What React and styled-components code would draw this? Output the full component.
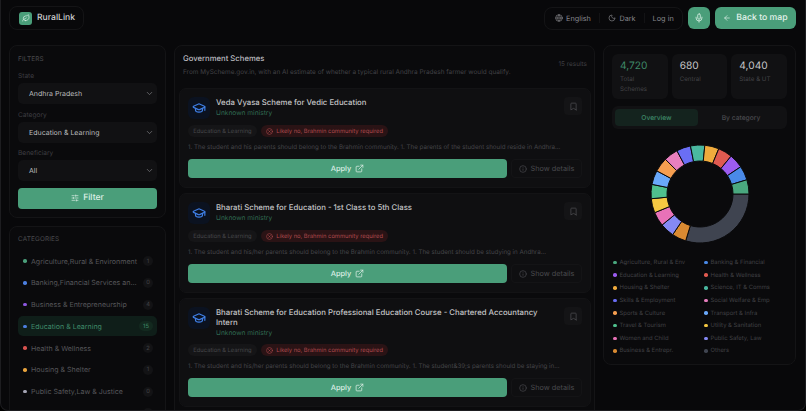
import React from 'react'
import styled, { createGlobalStyle } from 'styled-components'
import {
  Leaf, Globe, Moon, Mic, ArrowLeft, GraduationCap, Bookmark, CircleX,
  ExternalLink, Info, SlidersHorizontal, ChevronDown,
} from 'lucide-react'

const GREEN = '#4a9e7a'

const Global = createGlobalStyle`
  html, body { margin: 0; height: 100%; background: #000; }
  #root { height: 100%; }
  * { box-sizing: border-box; text-rendering: geometricPrecision; }
  body { font-family: Inter, "Liberation Sans", sans-serif; color: #d8d8da; overflow: hidden; }
`

const Page = styled.div`
  height: 411px;
  overflow: hidden;
  padding: 6px 9px 0 8px;
  background: #08080a;
  border: 1px solid #1d1d20;
  border-top: 0;
  border-radius: 0 0 8px 8px;
  display: flex;
  flex-direction: column;
  gap: 15px;
`
const Header = styled.header`
  display: flex;
  justify-content: space-between;
  align-items: center;
  height: 24px;
`
const Brand = styled.div`
  width: 75px;
  height: 24px;
  border: 1px solid #141416;
  border-radius: 8px;
  display: flex;
  align-items: center;
  gap: 5px;
  padding-left: 9px;
  font-size: 8.6px;
  font-weight: 500;
  color: #cfcfd1;
`
const LogoMark = styled.span`
  width: 13px;
  height: 13px;
  border-radius: 3px;
  background: ${GREEN};
  display: flex;
  align-items: center;
  justify-content: center;
  color: #dff3ea;
`
const HeaderRight = styled.div`
  display: flex;
  align-items: center;
  gap: 5px;
`
const NavPill = styled.nav`
  width: 139px;
  height: 23px;
  border: 1px solid #141416;
  border-radius: 8px;
  display: flex;
  align-items: center;
  padding-left: 9.5px;
  font-size: 7.3px;
  color: #85858a;
  white-space: nowrap;
`
const NavItem = styled.span`
  display: flex;
  align-items: center;
  gap: 3.5px;
  padding-right: 8px;
  margin-right: 8px;
  border-right: ${(p) => (p.$last ? 'none' : '1px solid #131315')};
  height: 10px;
`
const MicButton = styled.button`
  width: 22px;
  height: 22px;
  border: 0;
  border-radius: 6px;
  background: ${GREEN};
  color: #d9efe5;
  display: flex;
  align-items: center;
  justify-content: center;
  padding: 0;
`
const BackButton = styled.button`
  width: 81px;
  height: 22px;
  border: 0;
  border-radius: 6px;
  background: ${GREEN};
  color: #e3f2eb;
  font: 500 8.7px Inter, sans-serif;
  display: flex;
  align-items: center;
  justify-content: center;
  gap: 5px;
  padding: 0;
`
const Columns = styled.div`
  display: grid;
  grid-template-columns: 157px 421px 193px;
  gap: 8px;
  align-items: start;
`
const SideColumn = styled.aside`
  display: flex;
  flex-direction: column;
  gap: 8px;
`
const Panel = styled.section`
  border: 1px solid #141416;
  border-radius: 8px;
  background: #0a0a0c;
`
const FilterPanel = styled(Panel)`
  height: 173px;
  padding: 9px 8px 0 8px;
`
const SectionLabel = styled.div`
  font-size: 6.4px;
  line-height: 9px;
  letter-spacing: 0.15px;
  color: #4a4a4e;
  margin-bottom: ${(p) => p.$gap || 8}px;
`
const FieldLabel = styled.div`
  font-size: 6.6px;
  color: #3d3d41;
  margin-bottom: 2px;
  height: 9px;
`
const Select = styled.div`
  height: 21px;
  border-radius: 5px;
  background: #111113;
  display: flex;
  align-items: center;
  justify-content: space-between;
  padding: 0 3px 0 11px;
  margin-bottom: 6.5px;
  font-size: 7px;
  color: #bcbcbe;
  svg { color: #77777b; }
`
const FilterButton = styled.button`
  width: 100%;
  height: 21px;
  border: 0;
  border-radius: 4px;
  background: ${GREEN};
  color: #dcefe6;
  font: 500 8.6px Inter, sans-serif;
  display: flex;
  align-items: center;
  justify-content: center;
  gap: 4px;
`
const CategoryPanel = styled(Panel)`
  height: 200px;
  padding: 8px 8px 0 8px;
  overflow: hidden;
`
const CategoryRow = styled.div`
  height: 20px;
  margin-bottom: 1.75px;
  border-radius: 5px;
  background: ${(p) => (p.$active ? '#0f1e19' : 'transparent')};
  color: ${(p) => (p.$active ? '#3f8a69' : '#56565a')};
  display: flex;
  align-items: center;
  padding: 0 4px 0 5px;
  font-size: 7.05px;
`
const Dot = styled.i`
  flex: none;
  width: 3.5px;
  height: 3.5px;
  border-radius: 50%;
  background: ${(p) => p.$color};
`
const CategoryName = styled.span`
  flex: 1;
  margin-left: 4.5px;
  white-space: nowrap;
  overflow: hidden;
  text-overflow: ellipsis;
`
const CountBadge = styled.span`
  flex: none;
  width: ${(p) => (p.$active ? '14px' : '10px')};
  height: 10px;
  margin-left: 4px;
  border-radius: 5px;
  background: ${(p) => (p.$active ? '#13291f' : '#131315')};
  color: ${(p) => (p.$active ? '#3f8a69' : '#434347')};
  font-size: 5.8px;
  display: flex;
  align-items: center;
  justify-content: center;
`
const MainPanel = styled(Panel)`
  height: 380px;
  padding: 6px 3px 0 4px;
`
const MainHead = styled.div`
  display: flex;
  justify-content: space-between;
  align-items: center;
  padding: 0 4px;
  height: 24px;
  margin-bottom: 12px;
`
const MainTitle = styled.h2`
  margin: 0 0 3px;
  font-size: 7.7px;
  line-height: 12px;
  font-weight: 500;
  color: #bdbdc0;
`
const MainSub = styled.p`
  margin: 0;
  font-size: 6.45px;
  line-height: 8px;
  color: #414145;
`
const Results = styled.span`
  font-size: 6.4px;
  color: #3f3f43;
`
const CardList = styled.div`
  display: flex;
  flex-direction: column;
  gap: 5px;
`
const Card = styled.article`
  border: 1px solid #131315;
  border-radius: 7px;
  background: #0f0f11;
  padding: 8px 8px 9px;
`
const CardTop = styled.div`
  display: flex;
  align-items: flex-start;
  gap: 6px;
  min-height: 22px;
`
const SchemeIcon = styled.span`
  flex: none;
  width: 22px;
  height: 22px;
  border-radius: 6px;
  background: #0b1220;
  color: #3f7fe6;
  display: flex;
  align-items: center;
  justify-content: center;
`
const CardHeading = styled.div`
  flex: 1;
  padding-bottom: 1px;
`
const CardTitle = styled.h3`
  margin: 0;
  font-size: 7.75px;
  line-height: 10px;
  font-weight: 500;
  color: #c4c4c6;
`
const Ministry = styled.div`
  margin-top: 2px;
  font-size: 6.6px;
  line-height: 8px;
  color: #2f6b52;
`
const BookmarkButton = styled.span`
  flex: none;
  width: 18px;
  height: 18px;
  margin-left: 16px;
  border-radius: 4px;
  background: #141416;
  color: #4d4d51;
  display: flex;
  align-items: center;
  justify-content: center;
`
const TagRow = styled.div`
  display: flex;
  gap: 4px;
  margin-top: 6px;
`
const Tag = styled.span`
  height: 12px;
  padding: 0 5.3px;
  border-radius: 6px;
  background: #151517;
  color: #47474b;
  font-size: 5.8px;
  display: flex;
  align-items: center;
`
const WarnTag = styled(Tag)`
  background: #2a1315;
  color: #b04a4e;
  gap: 3px;
`
const Description = styled.p`
  margin: 5.5px 0 0;
  font-size: 6.2px;
  line-height: 9px;
  color: #454549;
  white-space: nowrap;
  overflow: hidden;
`
const CardActions = styled.div`
  display: flex;
  gap: 4px;
  margin-top: 7.5px;
`
const ApplyButton = styled.button`
  flex: 1;
  height: 19px;
  border: 0;
  border-radius: 4px;
  background: ${GREEN};
  color: #dcefe6;
  font: 500 7.4px Inter, sans-serif;
  display: flex;
  align-items: center;
  justify-content: center;
  gap: 4px;
`
const DetailsButton = styled.button`
  flex: none;
  width: 71px;
  height: 19px;
  border: 1px solid #141416;
  border-radius: 4px;
  background: transparent;
  color: #4a4a4e;
  font: 400 7.3px Inter, sans-serif;
  display: flex;
  align-items: center;
  justify-content: center;
  gap: 4px;
  padding: 0;
`
const StatsPanel = styled(Panel)`
  height: 320px;
  padding: 8px 8px 0 8px;
`
const StatGrid = styled.div`
  display: grid;
  grid-template-columns: repeat(3, 1fr);
  gap: 4px;
`
const StatCard = styled.div`
  height: 45px;
  border-radius: 6px;
  background: #111113;
  padding: 5px 8px;
`
const StatValue = styled.div`
  font-size: 10.2px;
  line-height: 14px;
  color: ${(p) => (p.$accent ? '#3f8a69' : '#c8c8ca')};
`
const StatLabel = styled.div`
  margin-top: 2px;
  font-size: 6.2px;
  line-height: 9.5px;
  color: #434347;
`
const Tabs = styled.div`
  height: 23px;
  margin-top: 7px;
  padding: 3px;
  border-radius: 6px;
  background: #111113;
  display: grid;
  grid-template-columns: 83px 1fr;
`
const Tab = styled.div`
  border-radius: 4px;
  background: ${(p) => (p.$active ? '#14231e' : 'transparent')};
  color: ${(p) => (p.$active ? '#3f8a69' : '#4a4a4e')};
  font-size: 6.7px;
  font-weight: 500;
  display: flex;
  align-items: center;
  justify-content: center;
`
const ChartWrap = styled.div`
  display: flex;
  justify-content: center;
  margin-top: 15px;
  svg { display: block; }
`
const Legend = styled.div`
  display: grid;
  grid-template-columns: 91px 1fr;
  row-gap: 3.65px;
  margin-top: 14px;
  padding-left: 1px;
`
const LegendItem = styled.div`
  display: flex;
  align-items: center;
  gap: 3px;
  height: 9px;
  font-size: 5.9px;
  color: #404044;
  white-space: nowrap;
`

const filters = [
  ['State', 'Andhra Pradesh'],
  ['Category', 'Education & Learning'],
  ['Beneficiary', 'All'],
]

const categories = [
  ['Agriculture,Rural & Environment', 1, '#4a9e7a'],
  ['Banking,Financial Services and Insurance', 0, '#4c7fe0'],
  ['Business & Entrepreneurship', 4, '#8d57e0'],
  ['Education & Learning', 15, '#4c7fe0'],
  ['Health & Wellness', 2, '#d9534f'],
  ['Housing & Shelter', 1, '#e8a33d'],
  ['Public Safety,Law & Justice', 0, '#a5a5b5'],
  ['Science, IT & Communications', 0, '#4aae9b'],
]

const schemes = [
  {
    title: 'Veda Vyasa Scheme for Vedic Education',
    text: '1. The student and his parents should belong to the Brahmin community. 1. The parents of the student should reside in Andhra...',
  },
  {
    title: 'Bharati Scheme for Education - 1st Class to 5th Class',
    text: '1. The student and his/her parents should belong to the Brahmin community. 1. The student should be studying in Andhra...',
  },
  {
    title: 'Bharati Scheme for Education Professional Education Course - Chartered Accountancy Intern',
    text: '1. The student and his/her parents should belong to the Brahmin community. 1. The student&39;s parents should be staying in...',
  },
]

const legend = [
  ['Agriculture, Rural & Env', '#4aa87f'],
  ['Banking & Financial', '#4a8ae8'],
  ['Education & Learning', '#9b5cf0'],
  ['Health & Wellness', '#e05a50'],
  ['Housing & Shelter', '#f0ab3d'],
  ['Science, IT & Comms', '#4ab8a0'],
  ['Skills & Employment', '#6a6ef5'],
  ['Social Welfare & Emp', '#e87fbf'],
  ['Sports & Culture', '#f59e50'],
  ['Transport & Infra', '#69a8fa'],
  ['Travel & Tourism', '#4fc08d'],
  ['Utility & Sanitation', '#f5c842'],
  ['Women and Child', '#e872b8'],
  ['Public Safety, Law', '#8589f5'],
  ['Business & Entrepr.', '#d98a32'],
  ['Others', '#3f4450'],
]

// clockwise from 3 o'clock: Others first, then the rest backwards
const ringOrder = [...legend.slice(0, 15)].reverse()
const OTHERS_DEG = 107

const arcPath = (cx, cy, r1, r2, from, to) => {
  const rad = (d) => (d * Math.PI) / 180
  const pt = (r, d) => `${(cx + r * Math.cos(rad(d))).toFixed(2)} ${(cy + r * Math.sin(rad(d))).toFixed(2)}`
  const large = to - from > 180 ? 1 : 0
  return `M${pt(r2, from)} A${r2} ${r2} 0 ${large} 1 ${pt(r2, to)} L${pt(r1, to)} A${r1} ${r1} 0 ${large} 0 ${pt(r1, from)} Z`
}

const Donut = () => {
  const step = (360 - OTHERS_DEG) / ringOrder.length
  return (
    <svg width="100" height="100" viewBox="0 0 100 100">
      <path d={arcPath(50, 50, 33, 49, 0, OTHERS_DEG)} fill="#3f4450" stroke="#0a0a0c" strokeWidth="1" />
      {ringOrder.map(([name, color], i) => (
        <path
          key={name}
          d={arcPath(50, 50, 33, 49, OTHERS_DEG + i * step, OTHERS_DEG + (i + 1) * step)}
          fill={color}
          stroke="#0a0a0c"
          strokeWidth="1"
        />
      ))}
    </svg>
  )
}

const SchemeCard = ({ title, text }) => (
  <Card>
    <CardTop>
      <SchemeIcon><GraduationCap size={14} /></SchemeIcon>
      <CardHeading>
        <CardTitle>{title}</CardTitle>
        <Ministry>Unknown ministry</Ministry>
      </CardHeading>
      <BookmarkButton><Bookmark size={9} /></BookmarkButton>
    </CardTop>
    <TagRow>
      <Tag>Education &amp; Learning</Tag>
      <WarnTag><CircleX size={7} />Likely no, Brahmin community required</WarnTag>
    </TagRow>
    <Description>{text}</Description>
    <CardActions>
      <ApplyButton>Apply <ExternalLink size={9} /></ApplyButton>
      <DetailsButton><Info size={8} />Show details</DetailsButton>
    </CardActions>
  </Card>
)

export default function App() {
  return (
    <>
      <Global />
      <Page>
        <Header>
          <Brand>
            <LogoMark><Leaf size={8} /></LogoMark>
            RuralLink
          </Brand>
          <HeaderRight>
            <NavPill>
              <NavItem><Globe size={8} />English</NavItem>
              <NavItem><Moon size={8} />Dark</NavItem>
              <NavItem $last>Log in</NavItem>
            </NavPill>
            <MicButton><Mic size={10} /></MicButton>
            <BackButton><ArrowLeft size={8} />Back to map</BackButton>
          </HeaderRight>
        </Header>
        <Columns>
          <SideColumn>
            <FilterPanel>
              <SectionLabel>FILTERS</SectionLabel>
              {filters.map(([label, value]) => (
                <div key={label}>
                  <FieldLabel>{label}</FieldLabel>
                  <Select>{value}<ChevronDown size={9} /></Select>
                </div>
              ))}
              <FilterButton><SlidersHorizontal size={8} />Filter</FilterButton>
            </FilterPanel>
            <CategoryPanel>
              <SectionLabel $gap={7}>CATEGORIES</SectionLabel>
              {categories.map(([name, count, color]) => {
                const active = name === 'Education & Learning'
                return (
                  <CategoryRow key={name} $active={active}>
                    <Dot $color={color} />
                    <CategoryName>{name}</CategoryName>
                    <CountBadge $active={active}>{count}</CountBadge>
                  </CategoryRow>
                )
              })}
            </CategoryPanel>
          </SideColumn>
          <MainPanel>
            <MainHead>
              <div>
                <MainTitle>Government Schemes</MainTitle>
                <MainSub>From MyScheme.gov.in, with an AI estimate of whether a typical rural Andhra Pradesh farmer would qualify.</MainSub>
              </div>
              <Results>15 results</Results>
            </MainHead>
            <CardList>
              {schemes.map((s) => <SchemeCard key={s.title} {...s} />)}
            </CardList>
          </MainPanel>
          <StatsPanel>
            <StatGrid>
              <StatCard><StatValue $accent>4,720</StatValue><StatLabel>Total Schemes</StatLabel></StatCard>
              <StatCard><StatValue>680</StatValue><StatLabel>Central</StatLabel></StatCard>
              <StatCard><StatValue>4,040</StatValue><StatLabel>State &amp; UT</StatLabel></StatCard>
            </StatGrid>
            <Tabs>
              <Tab $active>Overview</Tab>
              <Tab>By category</Tab>
            </Tabs>
            <ChartWrap><Donut /></ChartWrap>
            <Legend>
              {legend.map(([name, color]) => (
                <LegendItem key={name}><Dot $color={color} />{name}</LegendItem>
              ))}
            </Legend>
          </StatsPanel>
        </Columns>
      </Page>
    </>
  )
}
